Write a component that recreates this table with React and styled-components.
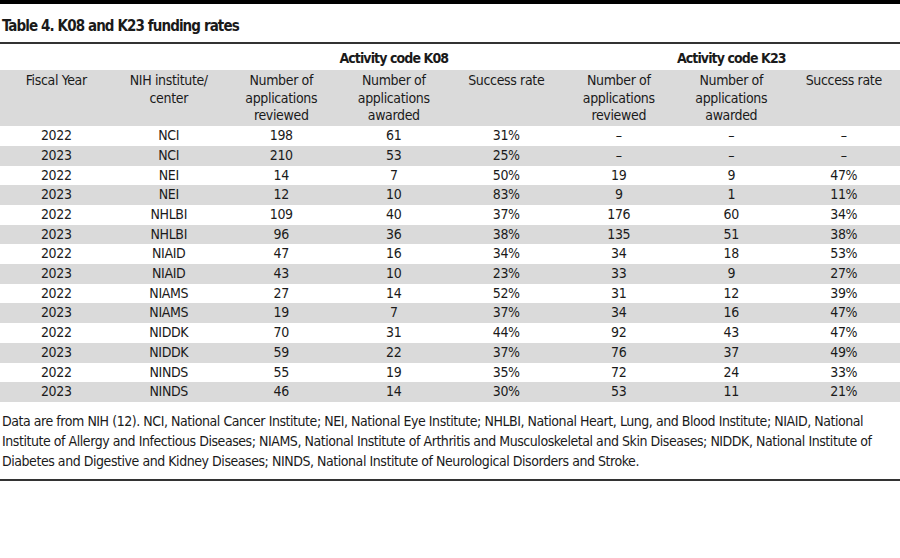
import React from 'react';
import styled, { createGlobalStyle } from 'styled-components';

const GlobalStyle = createGlobalStyle`
  body {
    margin: 0;
    background: #fff;
    font-family: "DejaVu Sans Condensed", "Liberation Sans", sans-serif;
    color: #1a1a1a;
  }
`;

const Page = styled.div`
  width: 900px;
`;

const TopBar = styled.div`
  height: 4px;
  background: #000;
`;

const Title = styled.h1`
  margin: 0;
  padding: 13px 2px 6px;
  font-size: 15px;
  font-weight: bold;
  letter-spacing: -0.9px;
  line-height: 19px;
  border-bottom: 2px solid #333;
`;

const Table = styled.table`
  width: 900px;
  margin-top: 5px;
  border-collapse: collapse;
  table-layout: fixed;
  font-size: 14px;
  letter-spacing: -0.35px;
`;

const GroupCell = styled.th`
  font-weight: bold;
  letter-spacing: -0.9px;
  text-align: center;
  vertical-align: bottom;
  height: 18px;
  padding: 0 0 3px;
  line-height: 17px;
`;

const HeadRow = styled.tr`
  background: #dadada;
`;

const HeadCell = styled.th`
  font-weight: normal;
  text-align: center;
  vertical-align: top;
  padding: 2px 4px 1px;
  line-height: 17.7px;
  height: 53px;
`;

const Row = styled.tr`
  background: ${p => (p.$shaded ? '#dadada' : '#fff')};
`;

const Cell = styled.td`
  text-align: center;
  padding: 0;
  height: 19.7px;
  line-height: 19.7px;
`;

const Note = styled.p`
  margin: 0;
  padding: 9px 2px 8px;
  font-size: 14px;
  letter-spacing: -0.45px;
  line-height: 20px;
  border-bottom: 2px solid #333;
`;

const rows = [
  ['2022', 'NCI', '198', '61', '31%', '–', '–', '–'],
  ['2023', 'NCI', '210', '53', '25%', '–', '–', '–'],
  ['2022', 'NEI', '14', '7', '50%', '19', '9', '47%'],
  ['2023', 'NEI', '12', '10', '83%', '9', '1', '11%'],
  ['2022', 'NHLBI', '109', '40', '37%', '176', '60', '34%'],
  ['2023', 'NHLBI', '96', '36', '38%', '135', '51', '38%'],
  ['2022', 'NIAID', '47', '16', '34%', '34', '18', '53%'],
  ['2023', 'NIAID', '43', '10', '23%', '33', '9', '27%'],
  ['2022', 'NIAMS', '27', '14', '52%', '31', '12', '39%'],
  ['2023', 'NIAMS', '19', '7', '37%', '34', '16', '47%'],
  ['2022', 'NIDDK', '70', '31', '44%', '92', '43', '47%'],
  ['2023', 'NIDDK', '59', '22', '37%', '76', '37', '49%'],
  ['2022', 'NINDS', '55', '19', '35%', '72', '24', '33%'],
  ['2023', 'NINDS', '46', '14', '30%', '53', '11', '21%'],
];

const headers = [
  ['Fiscal Year'],
  ['NIH institute/', 'center'],
  ['Number of', 'applications', 'reviewed'],
  ['Number of', 'applications', 'awarded'],
  ['Success rate'],
  ['Number of', 'applications', 'reviewed'],
  ['Number of', 'applications', 'awarded'],
  ['Success rate'],
];

export default function App() {
  return (
    <Page>
      <GlobalStyle />
      <TopBar />
      <Title>Table 4. K08 and K23 funding rates</Title>
      <Table>
        <thead>
          <tr>
            <GroupCell colSpan={2} />
            <GroupCell colSpan={3}>Activity code K08</GroupCell>
            <GroupCell colSpan={3}>Activity code K23</GroupCell>
          </tr>
          <HeadRow>
            {headers.map((h, i) => (
              <HeadCell key={i}>
                {h.map((line, j) => (
                  <React.Fragment key={j}>
                    {j > 0 && <br />}
                    {line}
                  </React.Fragment>
                ))}
              </HeadCell>
            ))}
          </HeadRow>
        </thead>
        <tbody>
          {rows.map((r, i) => (
            <Row key={i} $shaded={i % 2 === 1}>
              {r.map((v, j) => (
                <Cell key={j}>{v}</Cell>
              ))}
            </Row>
          ))}
        </tbody>
      </Table>
      <Note>
        Data are from NIH (12). NCI, National Cancer Institute; NEI, National Eye Institute; NHLBI,
        National Heart, Lung, and Blood Institute; NIAID, National Institute of Allergy and Infectious
        Diseases; NIAMS, National Institute of Arthritis and Musculoskeletal and Skin Diseases; NIDDK,
        National Institute of Diabetes and Digestive and Kidney Diseases; NINDS, National Institute of
        Neurological Disorders and Stroke.
      </Note>
    </Page>
  );
}
